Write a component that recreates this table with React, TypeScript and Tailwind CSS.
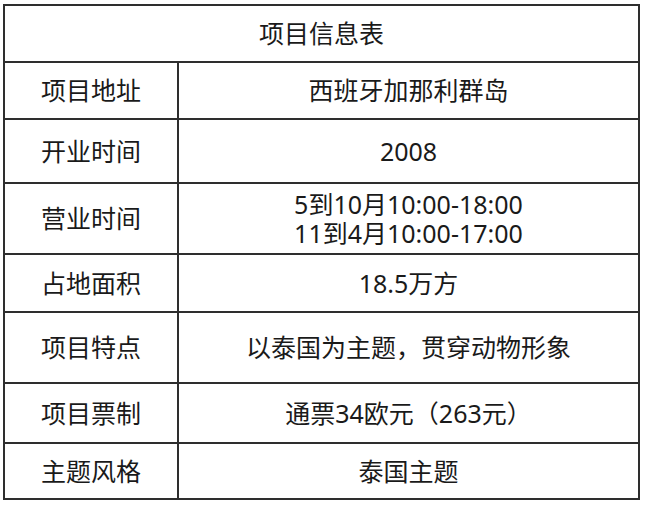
import React from "react";

const rows: { label: string; value: string[]; h: string }[] = [
  { label: "项目地址", value: ["西班牙加那利群岛"], h: "h-[57px]" },
  { label: "开业时间", value: ["2008"], h: "h-[64px]" },
  { label: "营业时间", value: ["5到10月10:00-18:00", "11到4月10:00-17:00"], h: "h-[71px]" },
  { label: "占地面积", value: ["18.5万方"], h: "h-[58px]" },
  { label: "项目特点", value: ["以泰国为主题，贯穿动物形象"], h: "h-[71px]" },
  { label: "项目票制", value: ["通票34欧元（263元）"], h: "h-[60px]" },
  { label: "主题风格", value: ["泰国主题"], h: "h-[56px]" },
];

export default function App() {
  return (
    <div className="w-[645px] h-[506px] bg-white pt-[4px] pl-[3px]">
      <div
        className="w-[637px] border-2 border-[#2e2e2e] text-[#1a1a1a] text-[25px] leading-[29px]"
        style={{ fontFamily: '"Noto Sans", "Noto Sans CJK SC", sans-serif' }}
      >
        <div className="h-[55px] flex items-center justify-center">项目信息表</div>
        {rows.map((r) => (
          <div key={r.label} className={`flex border-t-2 border-[#2e2e2e] ${r.h}`}>
            <div className="w-[174px] flex items-center justify-center border-r-2 border-[#2e2e2e]">
              {r.label}
            </div>
            <div className="flex-1 flex flex-col items-center justify-center">
              {r.value.map((v) => (
                <div key={v}>{v}</div>
              ))}
            </div>
          </div>
        ))}
      </div>
    </div>
  );
}
